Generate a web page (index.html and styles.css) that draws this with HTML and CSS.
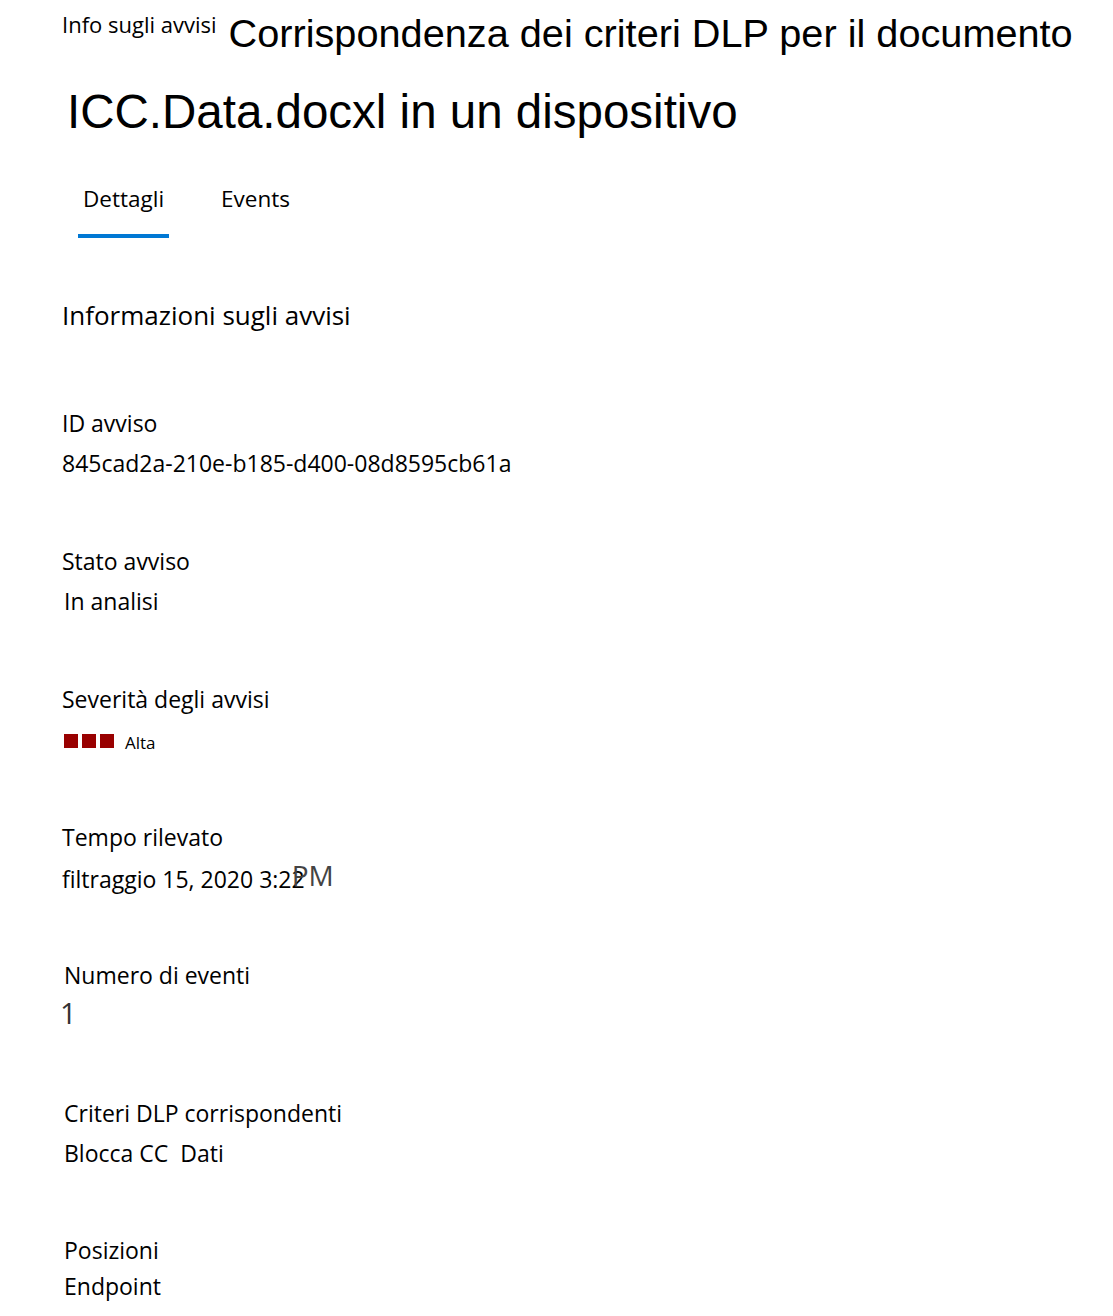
FILE: index.html
```html
<!DOCTYPE html>
<html lang="it">
<head>
<meta charset="utf-8">
<title>Info sugli avvisi</title>
<link rel="stylesheet" href="styles.css">
</head>
<body>
<div class="page">
  <header class="head">
    <div class="title-row">
      <span class="crumb">Info sugli avvisi</span>
      <h1 class="title">Corrispondenza dei criteri DLP per il documento</h1>
    </div>
    <h1 class="title2">ICC.Data.docxl in un dispositivo</h1>
  </header>
  <nav class="tabs">
    <div class="tab active">Dettagli</div>
    <div class="tab">Events</div>
  </nav>
  <h2 class="section">Informazioni sugli avvisi</h2>
  <div class="fields">
    <div class="field">
      <div class="label">ID avviso</div>
      <div class="value">845cad2a-210e-b185-d400-08d8595cb61a</div>
    </div>
    <div class="field">
      <div class="label">Stato avviso</div>
      <div class="value ind">In analisi</div>
    </div>
    <div class="field sev-field">
      <div class="label">Severità degli avvisi</div>
      <div class="value sev ind">
        <span class="sq"></span><span class="sq"></span><span class="sq"></span>
        <span class="sev-text">Alta</span>
      </div>
    </div>
    <div class="field">
      <div class="label">Tempo rilevato</div>
      <div class="value tight">filtraggio 15, 2020 3:22<span class="pm">PM</span></div>
    </div>
    <div class="field num-field">
      <div class="label ind">Numero di eventi</div>
      <div class="value num">1</div>
    </div>
    <div class="field">
      <div class="label ind">Criteri DLP corrispondenti</div>
      <div class="value ind">Blocca CC&nbsp; Dati</div>
    </div>
    <div class="field pos-field">
      <div class="label ind">Posizioni</div>
      <div class="value ind">Endpoint</div>
    </div>
  </div>
</div>
</body>
</html>
```
FILE: styles.css
```css
html, body {
  margin: 0;
  padding: 0;
  background: #ffffff;
}
body {
  font-family: "Open Sans", "Noto Sans", sans-serif;
  color: #000000;
}
.page {
  padding: 0 0 0 62px;
  width: 1051px;
}
.head {
  display: flex;
  flex-direction: column;
}
.title-row {
  display: flex;
  align-items: baseline;
  gap: 12px;
  padding-top: 8px;
}
.crumb {
  font-family: "Open Sans", sans-serif;
  font-size: 22px;
  letter-spacing: 0;
  transform: translateY(-14px);
}
.title {
  margin: 0;
  font-family: "Liberation Sans", Arial, sans-serif;
  font-weight: normal;
  font-size: 39.7px;
  line-height: 50px;
}
.title2 {
  margin: 26px 0 0 5px;
  font-family: "Liberation Sans", Arial, sans-serif;
  font-weight: normal;
  font-size: 47.5px;
  line-height: 56px;
}
.tabs {
  display: flex;
  gap: 47px;
  margin-top: 44px;
  margin-left: 16px;
}
.tab {
  font-size: 22.5px;
  line-height: 30px;
  padding: 0 5px 20px;
  border-bottom: 4px solid transparent;
}
.tab.active {
  border-bottom-color: #0078d4;
}
.section {
  margin: 61px 0 0 0;
  font-weight: normal;
  font-size: 26px;
  line-height: 32px;
}
.fields {
  display: flex;
  flex-direction: column;
  gap: 68px;
  margin-top: 77px;
}
.field {
  display: flex;
  flex-direction: column;
  gap: 10px;
}
.label, .value {
  font-size: 23px;
  line-height: 30px;
  white-space: nowrap;
}
.ind {
  margin-left: 2px;
}
.sev-field {
  gap: 12px;
  margin-bottom: -2px;
}
.sev {
  display: flex;
  align-items: center;
  gap: 4px;
  height: 30px;
}
.sq {
  width: 14px;
  height: 14px;
  background: #990000;
}
.sev-text {
  font-size: 17px;
  line-height: 20px;
  margin-left: 7px;
  margin-top: 4px;
}
.tight {
  margin-top: 0;
}
.pm {
  color: #444444;
  font-size: 28px;
  margin-left: -13px;
  position: relative;
  top: -2px;
}
.num-field {
  margin-top: -2px;
  gap: 8px;
}
.num {
  color: #333333;
  font-size: 29px;
  margin-left: -2px;
}
.num-field + .field {
  margin-top: 2px;
}
.pos-field {
  gap: 6px;
  margin-top: -1px;
}
```
